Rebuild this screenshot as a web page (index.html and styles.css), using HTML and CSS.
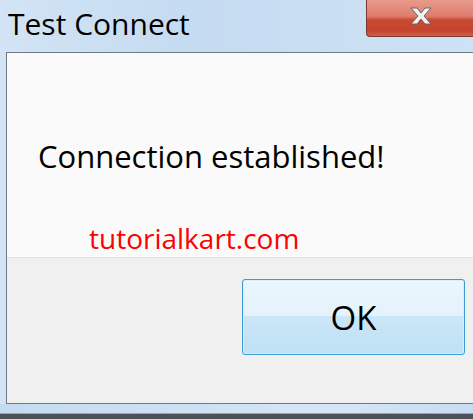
FILE: index.html
```html
<!DOCTYPE html>
<html lang="en">
<head>
    <meta charset="UTF-8">
    <meta name="viewport" content="width=device-width, initial-scale=1.0">
    <title>Test Connect</title>
    <link rel="stylesheet" href="styles.css">
</head>
<body>

    <div class="window">
        <div class="titlebar">
            <span class="title">Test Connect</span>
            <div class="close-btn">
                <svg width="22" height="18" viewBox="0 0 22 18">
                    <path d="M1 1 H7 L11 6 L15 1 H21 L14 9 L21 17 H15 L11 12 L7 17 H1 L8 9 Z"
                          fill="#f2f2f2" stroke="#666" stroke-width="1" stroke-linejoin="round"/>
                </svg>
            </div>
        </div>

        <div class="panel">
            <div class="message">
                <p class="message-text">Connection established!</p>
                <p class="watermark">tutorialkart.com</p>
            </div>
            <div class="buttons">
                <button class="ok-btn">OK</button>
            </div>
        </div>

        <div class="frame-bottom"></div>
        <div class="taskbar"></div>
    </div>

</body>
</html>
```

FILE: styles.css
```css
/* styles.css */

body {
    margin: 0;
    font-family: "Open Sans", "Noto Sans", sans-serif;
    background: #c8ddf2;
}

.window {
    width: 473px;
    height: 419px;
    overflow: hidden;
    display: flex;
    flex-direction: column;
    background: linear-gradient(90deg, #d2e4f5 0%, #c5dbf1 40%, #cfe2f5 100%);
}

.titlebar {
    height: 52px;
    flex-shrink: 0;
    display: flex;
    justify-content: space-between;
    align-items: flex-start;
}

.title {
    margin-left: 8px;
    margin-top: 4px;
    font-size: 30px;
    color: #000;
    line-height: 40px;
}

.close-btn {
    width: 112px;
    height: 36px;
    margin-right: -7px;
    border: 1px solid #7a3a30;
    border-top: none;
    border-radius: 0 0 0 4px;
    background: linear-gradient(180deg, #e89a8c 0%, #dd7e6e 45%, #c94a32 55%, #c5432d 85%, #d0604a 100%);
}

.close-btn svg {
    display: block;
    margin-left: 43px;
    margin-top: 7px;
}

.panel {
    margin-left: 6px;
    height: 350px;
    flex-shrink: 0;
    border: 1px solid #6f7983;
    border-right: none;
    display: flex;
    flex-direction: column;
}

.message {
    height: 204px;
    background: #fafafa;
    border-bottom: 1px solid #e2e2e2;
    padding-left: 31px;
    overflow: hidden;
}

.message-text {
    margin: 83px 0 0 0;
    font-size: 31px;
    line-height: 40px;
    color: #000;
}

.watermark {
    margin: 45px 0 0 51px;
    font-size: 28px;
    line-height: 34px;
    color: #ff0000;
}

.buttons {
    flex: 1;
    background: #f0f0f0;
    display: flex;
    justify-content: flex-end;
    align-items: flex-start;
}

.ok-btn {
    margin-top: 21px;
    margin-right: 8px;
    width: 223px;
    height: 76px;
    border: 1px solid #3c9ad6;
    border-radius: 3px;
    box-shadow: inset 0 0 0 1px #d8effb;
    background: linear-gradient(180deg, #ebf6fd 0%, #e4f2fb 48%, #cbe6f7 49%, #bfe0f5 100%);
    font-family: "Open Sans", "Noto Sans", sans-serif;
    font-size: 33px;
    color: #000;
    padding: 0;
}

.frame-bottom {
    height: 9px;
    flex-shrink: 0;
    background: linear-gradient(90deg, #c4dbf1 0%, #d5e6f6 70%, #c8ddf2 100%);
    border-bottom: 1px solid #8fa6bb;
}

.taskbar {
    flex: 1;
    background: #4e5156;
}
```
